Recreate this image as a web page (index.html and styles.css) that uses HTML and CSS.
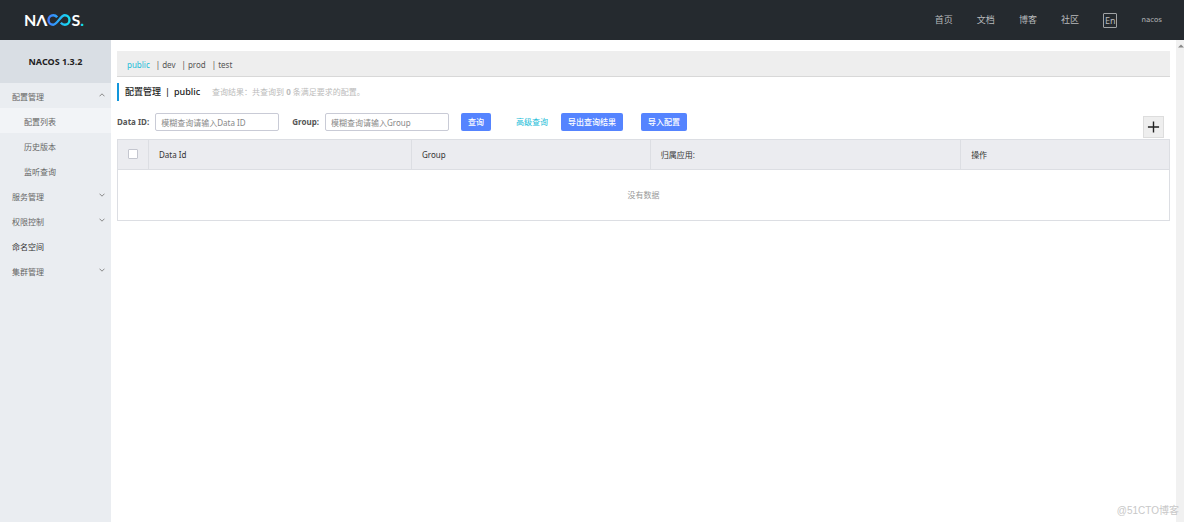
FILE: index.html
```html
<!DOCTYPE html>
<html lang="zh-CN">
<head>
<meta charset="utf-8">
<title>Nacos</title>
<link rel="stylesheet" href="styles.css">
</head>
<body>
<header class="topbar">
  <a class="logo" href="#" aria-label="Nacos">
    <span>NΛ</span>
    <svg class="logo-loop" viewBox="0 0 24 12" aria-hidden="true">
      <defs>
        <linearGradient id="loop" x1="0" x2="1" y1="0" y2="0">
          <stop offset="0" stop-color="#3f7dff"/>
          <stop offset="1" stop-color="#14e0f0"/>
        </linearGradient>
      </defs>
      <path d="M10.200 3.300C9.200 2 7.900 1.300 6.200 1.300A4.700 4.700 0 0 0 6.200 10.700C10.200 10.700 13.500 1.300 17.800 1.300A4.700 4.700 0 0 1 17.800 10.700C16.100 10.700 14.900 10 13.800 8.700" fill="none" stroke="url(#loop)" stroke-width="2.400"/>
    </svg>
    <span>S</span><span class="logo-dot">.</span>
  </a>
  <nav class="topnav">
    <a href="#">首页</a>
    <a href="#">文档</a>
    <a href="#">博客</a>
    <a href="#">社区</a>
    <button class="lang" type="button">En</button>
    <a class="user" href="#">nacos</a>
  </nav>
</header>
<div class="body">
  <aside class="sidebar">
    <h1 class="version">NACOS 1.3.2</h1>
    <ul class="menu">
      <li><a class="item" href="#">配置管理<svg class="chevron" viewBox="0 0 6 4"><path d="M.5 3.300 3 .8 5.500 3.300"/></svg></a></li>
      <li><a class="item sub active" href="#">配置列表</a></li>
      <li><a class="item sub" href="#">历史版本</a></li>
      <li><a class="item sub" href="#">监听查询</a></li>
      <li><a class="item" href="#">服务管理<svg class="chevron" viewBox="0 0 6 4"><path d="M.5.7 3 3.200 5.500.7"/></svg></a></li>
      <li><a class="item" href="#">权限控制<svg class="chevron" viewBox="0 0 6 4"><path d="M.5.7 3 3.200 5.500.7"/></svg></a></li>
      <li><a class="item dark" href="#">命名空间</a></li>
      <li><a class="item" href="#">集群管理<svg class="chevron" viewBox="0 0 6 4"><path d="M.5.7 3 3.200 5.500.7"/></svg></a></li>
    </ul>
  </aside>
  <main class="main">
    <nav class="spaces">
      <a class="current" href="#">public</a>
      <span>|<a href="#">dev</a></span>
      <span>|<a href="#">prod</a></span>
      <span>|<a href="#">test</a></span>
    </nav>
    <div class="heading">
      <h2 class="title"><span>配置管理</span><span>|</span><span>public</span></h2>
      <p class="result">查询结果：共查询到 <strong>0</strong> 条满足要求的配置。</p>
    </div>
    <form class="search">
      <label for="dataId">Data ID:</label>
      <input class="field" id="dataId" type="text" placeholder="模糊查询请输入Data ID">
      <label class="group" for="group">Group:</label>
      <input class="field" id="group" type="text" placeholder="模糊查询请输入Group">
      <button class="btn query" type="button">查询</button>
      <a class="advanced" href="#">高级查询</a>
      <button class="btn" type="button">导出查询结果</button>
      <button class="btn import" type="button">导入配置</button>
      <button class="add" type="button" aria-label="新建配置"><svg viewBox="0 0 14 14"><path d="M1 7H13M7 1V13"/></svg></button>
    </form>
    <table class="list">
      <colgroup><col class="c-check"><col class="c-id"><col class="c-group"><col class="c-app"><col></colgroup>
      <thead>
        <tr><th class="check"><input type="checkbox" aria-label="全选"></th><th>Data Id</th><th>Group</th><th>归属应用:</th><th>操作</th></tr>
      </thead>
      <tbody>
        <tr><td class="empty" colspan="5">没有数据</td></tr>
      </tbody>
    </table>
  </main>
  <div class="scrollbar"><svg viewBox="0 0 6 4"><path d="M0 3.500 3 .5 6 3.500Z"/></svg></div>
</div>
<div class="watermark">@51CTO博客</div>
</body>
</html>
```

FILE: styles.css
```css
* { box-sizing: border-box; }
body {
  margin: 0;
  min-height: 100vh;
  display: flex;
  flex-direction: column;
  background: #fff;
  color: #444;
  font: 8px/12px "Noto Sans", "Noto Sans CJK SC", sans-serif;
}
a { color: inherit; text-decoration: none; }
button, input { font: inherit; }
button { cursor: pointer; }

.topbar {
  display: flex;
  align-items: center;
  justify-content: space-between;
  height: 40px;
  padding: 0 22px 0 24px;
  background: #252a2f;
}
.logo {
  display: flex;
  align-items: center;
  color: #fff;
  font: bold 16px/20px Lato, sans-serif;
}
.logo-loop { width: 24px; height: 12px; }
.logo-dot { color: #14e0f0; }
.topnav {
  display: flex;
  align-items: center;
  gap: 24px;
  color: #b8babc;
  font-size: 9px;
}
.lang {
  padding: 0 1px;
  border: 1px solid #a0a3a5;
  border-radius: 1px;
  background: none;
  color: #b8babc;
  font-size: 9px;
  line-height: 13px;
}
.user { font: 7px/12px "DejaVu Sans", sans-serif; }

.body { flex: 1; display: flex; }
.sidebar { width: 111px; background: #eaedf1; }
.version {
  margin: 0;
  background: #d9dee4;
  color: #222;
  font-size: 9px;
  line-height: 43px;
  text-align: center;
}
.menu { margin: 0; padding: 0; list-style: none; }
.item {
  display: flex;
  align-items: center;
  justify-content: space-between;
  height: 25px;
  padding: 2px 6px 0 12px;
  color: #666;
}
.sub { padding-left: 24px; }
.active { background: #f2f4f7; }
.dark { color: #333; }
.chevron {
  width: 6px;
  height: 4px;
  margin-bottom: 4px;
  fill: none;
  stroke: #888;
  stroke-width: 1;
}

.main { flex: 1; padding: 11px 6px; }
.spaces {
  display: flex;
  align-items: center;
  gap: 6px;
  height: 26px;
  padding: 2px 10px 0;
  border-bottom: 1px solid #d8d8d8;
  background: #eee;
  color: #555;
}
.spaces a { margin-left: 2px; }
.spaces .current { margin: 0; color: #20bcd8; }
.heading {
  display: flex;
  align-items: center;
  gap: 12px;
  height: 18px;
  margin: 6px 0 12px;
  padding-left: 6px;
  border-left: 2px solid #1296db;
}
.title {
  display: flex;
  gap: 4px;
  margin: 0;
  color: #222;
  font-size: 9px;
  font-weight: 500;
}
.result { margin: 0; color: #bbb; }
.search {
  display: flex;
  align-items: center;
  height: 18px;
  margin-bottom: 8px;
}
label { color: #555; font-weight: bold; white-space: nowrap; }
.field {
  width: 124px;
  height: 18px;
  margin-left: 6px;
  padding: 0 5px;
  border: 1px solid #c9cbd6;
  border-radius: 2px;
  background: #fff;
}
.field::placeholder { color: #888; opacity: 1; }
.group { margin-left: 13px; }
.btn {
  height: 18px;
  padding: 0 7px;
  border: 0;
  border-radius: 2px;
  background: #5584ff;
  color: #fff;
  font-weight: 500;
}
.query { margin-left: 12px; }
.advanced { margin: 0 13px 0 25px; color: #20bcd8; }
.import { margin-left: 18px; }
.add {
  display: flex;
  align-self: flex-start;
  width: 21px;
  height: 22px;
  margin: 3px 6px 0 auto;
  padding: 3px;
  border: 1px solid #ddd;
  background: #eee;
}
.add svg { width: 14px; height: 14px; fill: none; stroke: #222; stroke-width: 1.500; }

.list {
  width: 100%;
  table-layout: fixed;
  border-collapse: collapse;
  border: 1px solid #dcdee3;
}
.c-check { width: 31px; }
.c-id { width: 25%; }
.c-group { width: 22.7%; }
.c-app { width: 29.5%; }
.list th {
  height: 30px;
  padding: 0 10px;
  border: 1px solid #dcdee3;
  background: #ebecf0;
  color: #333;
  font-weight: normal;
  text-align: left;
}
.list .check { padding: 0 0 2px 10px; }
.check input {
  display: block;
  width: 10px;
  height: 10px;
  margin: 0;
  appearance: none;
  border: 1px solid #c4c6cf;
  border-radius: 1px;
  background: #fff;
}
.empty { height: 51px; padding: 0; color: #999; text-align: center; }

.scrollbar {
  display: flex;
  justify-content: flex-end;
  width: 8px;
  padding-top: 4px;
  background: #f1f1f1;
}
.scrollbar svg { width: 6px; height: 4px; fill: #888; }
.watermark {
  position: absolute;
  right: 5px;
  bottom: 4px;
  color: #c8c8c8;
  font: 10px/14px "Liberation Sans", "Noto Sans CJK SC", sans-serif;
}
```
